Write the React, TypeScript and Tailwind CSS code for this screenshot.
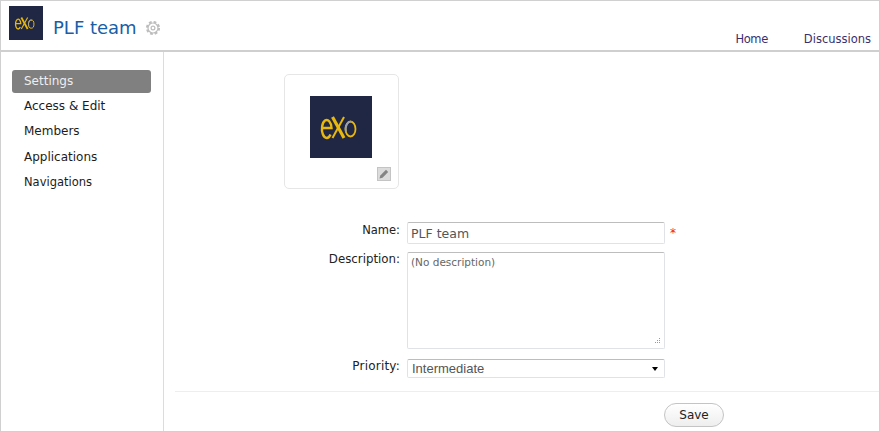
import React from "react";

const Logo = ({ size }: { size: number }) => (
  <svg width={size} height={size} viewBox="0 0 62 62" className="block shrink-0">
    <rect width="62" height="62" fill="#1f2744" />
    <g fill="none" stroke="#e8b80c">
      <path d="M12 32H21.5A4.8 9 0 1 0 20.5 38.5" strokeWidth="2.4" />
      <path d="M22.5 21 34 42" strokeWidth="3.2" />
      <path d="M34 21 22.5 42" strokeWidth="2" />
      <ellipse cx="40.5" cy="33" rx="5" ry="7.5" strokeWidth="1.8" />
      <path d="M42 26A5 7.5 0 0 0 36 36" strokeWidth="1.8" stroke="#9aa0ad" />
    </g>
  </svg>
);

const Gear = () => (
  <svg width="16" height="16" viewBox="0 0 16 16" className="ml-[8px] mt-[3px]">
    <circle cx="8" cy="8" r="6" fill="none" stroke="#bdbdbd" strokeWidth="2.2" strokeDasharray="2.7 2" />
    <circle cx="8" cy="8" r="5" fill="none" stroke="#bdbdbd" strokeWidth="1.2" />
    <circle cx="8" cy="8" r="1.9" fill="none" stroke="#bdbdbd" strokeWidth="1.2" />
  </svg>
);

const nav = [
  { t: "Access & Edit", c: "text-[12px]" },
  { t: "Members", c: "text-[12px]" },
  { t: "Applications", c: "text-[12px]" },
  { t: "Navigations", c: "text-[11.5px]" },
];

export default function App() {
  return (
    <div className="w-[880px] h-[432px] overflow-hidden bg-white border border-[#d0d0d0] flex flex-col font-['DejaVu_Sans',sans-serif] text-[12px] text-[#222]">
      <header className="h-[49px] shrink-0 border-b-2 border-[#cfcfcf] flex relative box-content -mb-px">
        <div className="pl-2 pt-[5px]">
          <Logo size={34} />
        </div>
        <div className="flex items-start pl-[10px] pt-[16px]">
          <span className="text-[18px] leading-[22px] text-[#1a5ea8]">PLF team</span>
          <Gear />
        </div>
        <nav className="ml-auto flex items-end gap-[36px] pr-2 pb-[2px] text-[11.5px] text-[#3a2f6e]">
          <a className="tracking-[-0.4px]">Home</a>
          <a>Discussions</a>
        </nav>
      </header>
      <div className="flex-1 flex min-h-0">
        <aside className="w-[163px] shrink-0 border-r border-[#dcdcdc] pl-[11px] pt-[19px]">
          <div className="w-[139px] h-[23px] rounded-[3px] bg-[#808080] text-[#eeeeee] pl-3 leading-[23px]">Settings</div>
          <ul className="pl-3 mt-[1px]">
            {nav.map((n) => (
              <li key={n.t} className={`h-[25.4px] leading-[25px] text-[#1c1c1c] ${n.c}`}>{n.t}</li>
            ))}
          </ul>
        </aside>
        <main className="flex-1 pt-[23px] flex flex-col">
          <div className="ml-[120px] w-[115px] h-[115px] rounded-[5px] border border-[#e6e6e6] relative">
            <div className="ml-[25px] mt-[21px] w-[62px]">
              <Logo size={62} />
            </div>
            <div className="absolute left-[92px] top-[92px] w-[14px] h-[14px] bg-[#dcdcdc] border border-[#c4c4c4] flex items-center justify-center">
              <svg width="12" height="12" viewBox="0 0 12 12">
                <path d="M1.5 10.5l.8-3 5.7-5.7 2.2 2.2-5.7 5.7z" fill="#858585" />
              </svg>
            </div>
          </div>
          <form className="mt-[33px] ml-[120px] grid grid-cols-[116px_258px_auto] gap-x-[7px] text-[#222]">
            <label className="text-right leading-[15px] pt-px text-[11.5px]">Name:</label>
            <div className="h-[22px] border border-[#dfe3e8] border-t-[#bdbdbd] rounded-[2px] pl-[3px] text-[12.5px] leading-[21px] text-[#555]">PLF team</div>
            <span className="text-[#ee2222] text-[12px] leading-[22px] -ml-[2px]">*</span>
            <label className="text-right mt-[8px] leading-[15px] text-[11.8px]">Description:</label>
            <div className="mt-[8px] h-[97px] border border-[#dfe3e8] border-t-[#bdbdbd] rounded-[2px] pl-[3px] pt-[2px] text-[10.5px] leading-[15px] text-[#666] relative">
              (No description)
              <svg width="8" height="8" viewBox="0 0 8 8" className="absolute right-[3px] bottom-[3px]">
                <path d="M6 1h1v1H6zM6 3h1v1H6zM4 3h1v1H4zM6 5h1v1H6zM4 5h1v1H4zM2 5h1v1H2z" fill="#9a9a9a" />
              </svg>
            </div>
            <span />
            <label className="text-right mt-[10px] leading-[15px] text-[12px] tracking-[0.2px]">Priority:</label>
            <div className="mt-[10px] h-[19px] border border-[#dfe3e8] border-t-[#bdbdbd] rounded-[2px] pl-[4px] pr-[6px] flex items-center justify-between font-['Liberation_Sans',sans-serif] text-[13px] text-[#555]">
              Intermediate
              <span className="w-0 h-0 border-x-[3.5px] border-x-transparent border-t-[4px] border-t-black" />
            </div>
            <span />
          </form>
          <div className="ml-[11px] mt-[13px] border-t border-[#eeeeee] pt-[11px] pl-[489px]">
            <button type="button" className="block w-[60px] h-[24px] rounded-[12px] border border-[#c4c4c4] bg-gradient-to-b from-white to-[#eeeeee] text-[12px] text-[#222]">Save</button>
          </div>
        </main>
      </div>
    </div>
  );
}
